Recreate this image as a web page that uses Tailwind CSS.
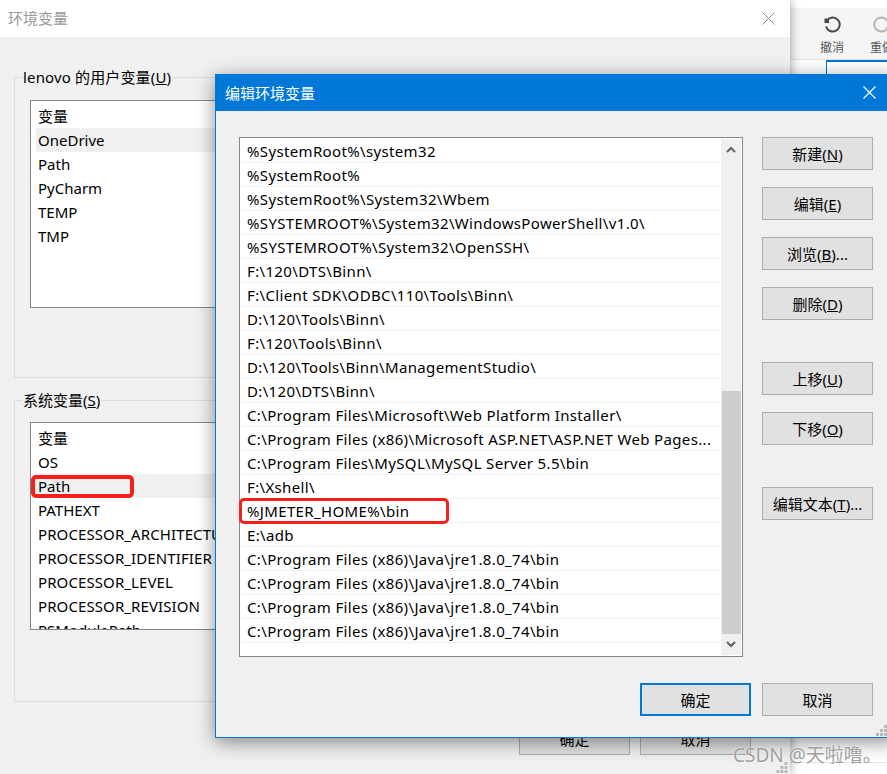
<!DOCTYPE html>
<html lang="zh-CN">

<head>
    <meta charset="UTF-8" />
    <title>编辑环境变量</title>
    <script src="https://cdn.jsdelivr.net/npm/@tailwindcss/browser@4"></script>
</head>

<body class="overflow-hidden">
    <div class="relative w-[887px] h-[774px] overflow-hidden bg-white text-[15px] leading-[24px] text-black font-['Noto_Sans','Noto_Sans_CJK_SC',sans-serif]">

        <!-- app behind -->
        <div class="absolute left-[790px] top-0 w-[97px] h-[774px] pt-2">
            <div class="h-[52px] bg-[#f5f5f5] border-b border-[#e3e3e3] flex gap-[26px] pl-[30px] text-[12px] text-[#555]">
                <div class="flex flex-col items-center w-[24px] shrink-0 pt-[8px]">
                    <svg class="w-[18px] h-[18px]" viewBox="0 0 18 18" fill="none" stroke="#4a4a4a" stroke-width="2">
                        <path d="M4 4.500 A7 7 0 1 1 3 10.500" />
                        <path d="M1.500 2.500 H6 V7 H1.500 Z" fill="#4a4a4a" stroke="none" />
                    </svg>
                    <span class="whitespace-nowrap leading-[18px] mt-[5px]">撤消</span>
                </div>
                <div class="flex flex-col items-center w-[24px] shrink-0 pt-[8px]">
                    <svg class="w-[18px] h-[18px]" viewBox="0 0 18 18" fill="none" stroke="#b5b5b5" stroke-width="2">
                        <path d="M14 4.500 A7 7 0 1 0 15 10.500" />
                    </svg>
                    <span class="whitespace-nowrap leading-[18px] mt-[5px]">重做</span>
                </div>
            </div>
            <div class="ml-[36px] h-[14px] border-t-2 border-l border-[#0078d7]"></div>
            <div class="flex flex-col mt-[659px] h-[30px] border-b border-[#e3e3e3]"></div>
        </div>

        <!-- 环境变量 window -->
        <div class="absolute left-0 top-0 w-[790px] h-[774px] bg-[#f0f0f0] shadow-[0_0_10px_rgba(0,0,0,0.4)]">
            <div class="h-[37px] bg-white flex items-center justify-between pl-2 pr-[15px] text-[#999]">
                <span class="-mt-[1px]">环境变量</span>
                <svg class="w-[13px] h-[13px]" viewBox="0 0 13 13" stroke="#8a8a8a" stroke-width="1">
                    <path d="M0.500 0.500 L12.500 12.500 M12.500 0.500 L0.500 12.500" />
                </svg>
            </div>

            <div class="px-[14px] pt-[40px] flex flex-col gap-[22px] w-[775px]">
                <div class="h-[301px] border border-[#dcdcdc] px-[15px]">
                    <div class="-mt-[13px] -ml-[8px] px-[1px] w-fit bg-[#f0f0f0] tracking-[0.15px]">lenovo 的用户变量(<u>U</u>)</div>
                    <div class="mt-[11px] h-[208px] bg-white border border-[#828790] pl-[5px] pr-[5px] pt-[3px]">
                        <div class="pl-[2px]">变量</div>
                        <div class="pl-[2px] bg-[#f0f0f0]">OneDrive</div>
                        <div class="pl-[2px]">Path</div>
                        <div class="pl-[2px]">PyCharm</div>
                        <div class="pl-[2px]">TEMP</div>
                        <div class="pl-[2px]">TMP</div>
                    </div>
                </div>
                <div class="h-[302px] border border-[#dcdcdc] px-[15px]">
                    <div class="-mt-[13px] -ml-[8px] px-[1px] w-fit bg-[#f0f0f0]">系统变量(<u>S</u>)</div>
                    <div class="mt-[10px] h-[208px] overflow-hidden bg-white border border-[#828790] pl-[1px] pt-[3px]">
                        <div class="pl-[6px]">变量</div>
                        <div class="pl-[6px]">OS</div>
                        <div class="relative pl-[6px] bg-[#f0f0f0]">Path
                            <div class="absolute -left-[1px] top-[1px] w-[103px] h-[23px] border-4 border-[#f5201c] rounded-[5px]"></div>
                        </div>
                        <div class="pl-[6px]">PATHEXT</div>
                        <div class="pl-[6px] tracking-[0.1px]">PROCESSOR_ARCHITECTURE</div>
                        <div class="pl-[6px] tracking-[0.1px]">PROCESSOR_IDENTIFIER</div>
                        <div class="pl-[6px] tracking-[0.1px]">PROCESSOR_LEVEL</div>
                        <div class="pl-[6px] tracking-[0.1px]">PROCESSOR_REVISION</div>
                        <div class="pl-[6px]">PSModulePath</div>
                    </div>
                </div>
            </div>

            <div class="flex justify-end gap-[10px] pr-[39px] mt-[20px]">
                <button class="w-[111px] h-[33px] bg-[#e1e1e1] border border-[#adadad]">确定</button>
                <button class="w-[111px] h-[33px] bg-[#e1e1e1] border border-[#adadad]">取消</button>
            </div>
        </div>

        <!-- 编辑环境变量 dialog -->
        <div class="absolute left-[215px] top-[74px] w-[680px] h-[664px] flex flex-col bg-[#f0f0f0] border border-[#0078d7] shadow-[0_4px_18px_rgba(0,0,0,0.45)]">
            <div class="h-[37px] shrink-0 -mx-[1px] -mt-[1px] bg-[#0078d7] text-white flex items-center justify-between pl-[10px] pr-[18px]">
                <span>编辑环境变量</span>
                <svg class="w-[13px] h-[13px] mr-[1px]" viewBox="0 0 13 13" stroke="#ffffff" stroke-width="1.200">
                    <path d="M0.500 0.500 L12.500 12.500 M12.500 0.500 L0.500 12.500" />
                </svg>
            </div>

            <div class="flex items-start pl-[23px] pt-[26px]">
                <div class="w-[504px] h-[520px] shrink-0 bg-white border border-[#828790] flex p-[1px]">
                    <div class="w-[479px] flex flex-col shrink-0 whitespace-nowrap tracking-[0.35px]">
                        <div class="h-[24px] pl-[6px] border-b border-[#f0f0f0]">%SystemRoot%\system32</div>
                        <div class="h-[24px] pl-[6px] border-b border-[#f0f0f0]">%SystemRoot%</div>
                        <div class="h-[24px] pl-[6px] border-b border-[#f0f0f0]">%SystemRoot%\System32\Wbem</div>
                        <div class="h-[24px] pl-[6px] border-b border-[#f0f0f0]">%SYSTEMROOT%\System32\WindowsPowerShell\v1.0\</div>
                        <div class="h-[24px] pl-[6px] border-b border-[#f0f0f0]">%SYSTEMROOT%\System32\OpenSSH\</div>
                        <div class="h-[24px] pl-[6px] border-b border-[#f0f0f0]">F:\120\DTS\Binn\</div>
                        <div class="h-[24px] pl-[6px] border-b border-[#f0f0f0]">F:\Client SDK\ODBC\110\Tools\Binn\</div>
                        <div class="h-[24px] pl-[6px] border-b border-[#f0f0f0]">D:\120\Tools\Binn\</div>
                        <div class="h-[24px] pl-[6px] border-b border-[#f0f0f0]">F:\120\Tools\Binn\</div>
                        <div class="h-[24px] pl-[6px] border-b border-[#f0f0f0]">D:\120\Tools\Binn\ManagementStudio\</div>
                        <div class="h-[24px] pl-[6px] border-b border-[#f0f0f0]">D:\120\DTS\Binn\</div>
                        <div class="h-[24px] pl-[6px] border-b border-[#f0f0f0]">C:\Program Files\Microsoft\Web Platform Installer\</div>
                        <div class="h-[24px] pl-[6px] border-b border-[#f0f0f0]">C:\Program Files (x86)\Microsoft ASP.NET\ASP.NET Web Pages...</div>
                        <div class="h-[24px] pl-[6px] border-b border-[#f0f0f0]">C:\Program Files\MySQL\MySQL Server 5.5\bin</div>
                        <div class="h-[24px] pl-[6px] border-b border-[#f0f0f0]">F:\Xshell\</div>
                        <div class="relative h-[24px] pl-[6px] border-b border-[#f0f0f0]">%JMETER_HOME%\bin
                            <div class="absolute -left-[2px] -top-[1px] w-[210px] h-[26px] border-[3px] border-[#f5201c] rounded-[5px]"></div>
                        </div>
                        <div class="h-[24px] pl-[6px] border-b border-[#f0f0f0]">E:\adb</div>
                        <div class="h-[24px] pl-[6px] border-b border-[#f0f0f0]">C:\Program Files (x86)\Java\jre1.8.0_74\bin</div>
                        <div class="h-[24px] pl-[6px] border-b border-[#f0f0f0]">C:\Program Files (x86)\Java\jre1.8.0_74\bin</div>
                        <div class="h-[24px] pl-[6px] border-b border-[#f0f0f0]">C:\Program Files (x86)\Java\jre1.8.0_74\bin</div>
                        <div class="h-[24px] pl-[6px] border-b border-[#f0f0f0]">C:\Program Files (x86)\Java\jre1.8.0_74\bin</div>
                    </div>
                    <div class="w-[20px] ml-[1px] bg-[#f0f0f0] flex flex-col items-center shrink-0">
                        <div class="h-[20px] flex items-center justify-center shrink-0">
                            <svg class="w-[10px] h-[7px]" viewBox="0 0 10 7" fill="none" stroke="#606060" stroke-width="2">
                                <path d="M1 6 L5 2 L9 6" />
                            </svg>
                        </div>
                        <div class="h-[232px] shrink-0"></div>
                        <div class="w-[19px] h-[243px] bg-[#cdcdcd] shrink-0"></div>
                        <div class="flex-1 flex items-center justify-center">
                            <svg class="w-[10px] h-[7px]" viewBox="0 0 10 7" fill="none" stroke="#606060" stroke-width="2">
                                <path d="M1 1 L5 5 L9 1" />
                            </svg>
                        </div>
                    </div>
                </div>

                <div class="ml-[19px] w-[111px] shrink-0 flex flex-col">
                    <button class="h-[33px] bg-[#e1e1e1] border border-[#adadad]">新建(<u>N</u>)</button>
                    <button class="h-[33px] mt-[17px] bg-[#e1e1e1] border border-[#adadad]">编辑(<u>E</u>)</button>
                    <button class="h-[33px] mt-[17px] bg-[#e1e1e1] border border-[#adadad]">浏览(<u>B</u>)...</button>
                    <button class="h-[33px] mt-[17px] bg-[#e1e1e1] border border-[#adadad]">删除(<u>D</u>)</button>
                    <button class="h-[33px] mt-[42px] bg-[#e1e1e1] border border-[#adadad]">上移(<u>U</u>)</button>
                    <button class="h-[33px] mt-[17px] bg-[#e1e1e1] border border-[#adadad]">下移(<u>O</u>)</button>
                    <button class="h-[33px] mt-[42px] bg-[#e1e1e1] border border-[#adadad]">编辑文本(<u>T</u>)...</button>
                </div>
            </div>

            <div class="flex gap-[11px] pl-[424px] mt-[26px]">
                <button class="w-[111px] h-[33px] shrink-0 bg-[#e1e1e1] border-2 border-[#0078d7]">确定</button>
                <button class="w-[111px] h-[33px] shrink-0 bg-[#e1e1e1] border border-[#adadad]">取消</button>
            </div>
        </div>

        <!-- resize grips -->
        <svg class="absolute left-[876px] top-[725px] w-[11px] h-[12px]" viewBox="0 0 11 12" fill="#b8b8b8">
            <path d="M8 0h3v3H8z M4 4h3v3H4z M8 4h3v3H8z M0 8h3v3H0z M4 8h3v3H4z M8 8h3v3H8z" />
        </svg>
        <svg class="absolute left-[776px] top-[762px] w-[12px] h-[12px]" viewBox="0 0 11 12" fill="#b8b8b8">
            <path d="M8 0h3v3H8z M4 4h3v3H4z M8 4h3v3H8z M0 8h3v3H0z M4 8h3v3H4z M8 8h3v3H8z" />
        </svg>

        <!-- watermark -->
        <div class="absolute left-[733px] top-[743px] text-[19px] leading-[24px] whitespace-nowrap text-[#a0a0a0] [text-shadow:0_0_2px_#ffffff]">CSDN @天啦噜。</div>
    </div>
</body>

</html>
